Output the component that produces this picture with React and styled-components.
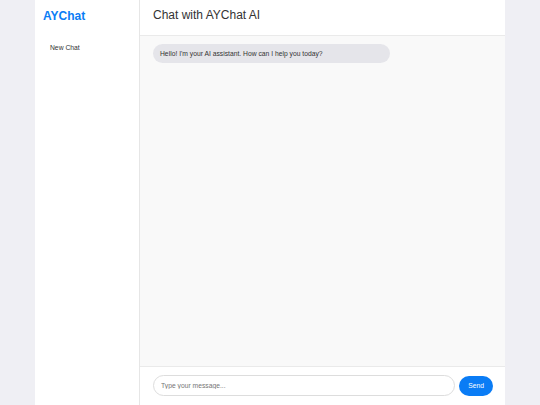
import React from "react";
import styled, { createGlobalStyle } from "styled-components";

const GlobalStyle = createGlobalStyle`
  html, body {
    margin: 0;
    padding: 0;
    height: 100%;
    background: #efeff4;
    font-family: "Liberation Sans", Arial, sans-serif;
  }
  #root { height: 100%; }
  * { box-sizing: border-box; }
`;

const Shell = styled.div`
  display: flex;
  width: 470px;
  height: 405px;
  margin: 0 auto;
  background: #ffffff;
`;

const Sidebar = styled.aside`
  width: 105px;
  flex-shrink: 0;
  border-right: 1px solid #e6e6e6;
  padding: 10px 8px;
  display: flex;
  flex-direction: column;
`;

const Logo = styled.h1`
  margin: 0 0 13px;
  font-size: 12px;
  font-weight: 700;
  line-height: 13.8px;
  color: #0a7cf5;
`;

const NavItem = styled.div`
  padding: 7px 7px;
  font-size: 6.75px;
  line-height: 7.8px;
  color: #333333;
`;

const Main = styled.main`
  flex: 1;
  display: flex;
  flex-direction: column;
  min-width: 0;
`;

const Header = styled.header`
  height: 36px;
  padding: 9px 13px 0;
  border-bottom: 1px solid #eaeaea;
  background: #ffffff;
`;

const Title = styled.h2`
  margin: 0;
  font-size: 12px;
  font-weight: 400;
  line-height: 13.8px;
  color: #333333;
`;

const Messages = styled.section`
  flex: 1;
  background: #f9f9f9;
  padding: 8px 13px;
  display: flex;
  flex-direction: column;
  align-items: flex-start;
`;

const Bubble = styled.div`
  width: 70%;
  padding: 5.6px 7px;
  border-radius: 10px;
  background: ${(p) => (p.$mine ? "#0a7cf5" : "#e5e5ea")};
  color: ${(p) => (p.$mine ? "#ffffff" : "#333333")};
  font-size: 6.75px;
  line-height: 7.8px;
`;

const Composer = styled.form`
  height: 39px;
  border-top: 1px solid #eaeaea;
  padding: 8px 12px 0 13px;
  display: flex;
  align-items: flex-start;
  gap: 4.5px;
  background: #ffffff;
`;

const Input = styled.input`
  flex: 1;
  height: 21px;
  border: 1px solid #dddddd;
  border-radius: 11px;
  padding: 0 7px;
  font-family: inherit;
  font-size: 6.75px;
  color: #333;
  outline: none;
  &::placeholder { color: #757575; }
`;

const SendButton = styled.button`
  height: 20px;
  margin-top: 0.5px;
  padding: 0 9px;
  border: none;
  border-radius: 10px;
  background: #0a7cf5;
  color: #ffffff;
  font-family: inherit;
  font-size: 6.75px;
  cursor: pointer;
`;

export default function App() {
  return (
    <>
      <GlobalStyle />
      <Shell>
        <Sidebar>
          <Logo>AYChat</Logo>
          <NavItem>New Chat</NavItem>
        </Sidebar>
        <Main>
          <Header>
            <Title>Chat with AYChat AI</Title>
          </Header>
          <Messages>
            <Bubble>Hello! I'm your AI assistant. How can I help you today?</Bubble>
          </Messages>
          <Composer onSubmit={(e) => e.preventDefault()}>
            <Input placeholder="Type your message..." />
            <SendButton type="submit">Send</SendButton>
          </Composer>
        </Main>
      </Shell>
    </>
  );
}
